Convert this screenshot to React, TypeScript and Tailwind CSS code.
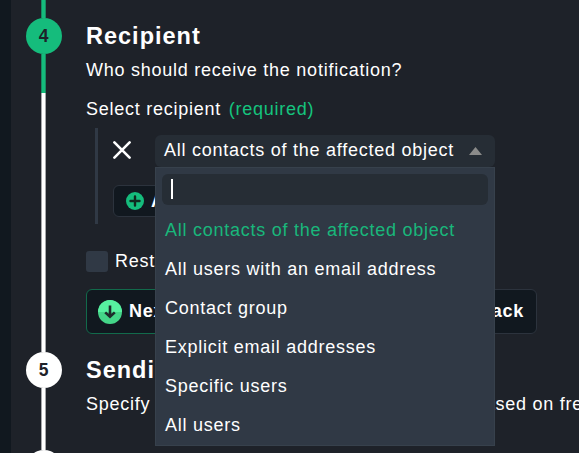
import type { ReactNode } from "react";

const options = [
  "All contacts of the affected object",
  "All users with an email address",
  "Contact group",
  "Explicit email addresses",
  "Specific users",
  "All users",
];

function Step({
  number,
  active,
  height,
  children,
}: {
  number: number;
  active?: boolean;
  height: string;
  children?: ReactNode;
}) {
  return (
    <li className={`flex shrink-0 ${height}`}>
      <div className="flex w-9 shrink-0 flex-col items-start">
        <span
          className={`flex h-9 w-9 shrink-0 items-center justify-center rounded-full pr-px text-[17.5px] font-bold tracking-normal text-[#1e2229] ${
            active ? "bg-[#15bc7c]" : "bg-white"
          }`}
        >
          {number}
        </span>
        {active && (
          <div className="ml-[15px] h-[39px] w-[5px] shrink-0 border-x border-[#178c62] bg-[#15bc7c]" />
        )}
        <div className="ml-[15px] w-[5px] grow border-x border-[#a5a6a9] bg-white" />
      </div>
      <div className="ml-6 flex min-w-0 grow flex-col items-start whitespace-nowrap">
        {children}
      </div>
    </li>
  );
}

function Dropdown() {
  return (
    <div className="absolute top-8 left-0 z-10 flex h-[279px] w-[340px] flex-col border border-[#37414c] bg-[#303945] pt-[6px]">
      <div className="mx-[6px] flex h-[31px] shrink-0 items-center rounded-md bg-[#262d35] pb-px pl-[9px]">
        <span className="h-5 w-[2px] bg-white" />
      </div>
      <ul className="mt-[6px]">
        {options.map((option, i) => (
          <li
            key={option}
            className={`h-[39px] pl-[9px] leading-[38px] ${i === 0 ? "text-[#19b77b]" : ""}`}
          >
            {option}
          </li>
        ))}
      </ul>
    </div>
  );
}

export default function App() {
  return (
    <main className="flex h-[453px] w-full overflow-hidden bg-[#1e2229] font-['Liberation_Sans',Arial,sans-serif] text-[18px] tracking-[0.75px] text-white">
      <aside className="w-[11px] shrink-0 bg-[#11181f]" />
      <ol className="ml-[15px] flex min-w-0 grow flex-col">
        <li className="flex h-[18px] w-9 shrink-0 pl-[15px]">
          <div className="w-[5px] border-x border-[#178c62] bg-[#15bc7c]" />
        </li>

        <Step number={4} active height="h-[334px]">
          <h2 className="h-9 text-[23.5px] leading-9 font-bold tracking-[1px]">
            Recipient
          </h2>
          <p className="mt-[5px] leading-[22px]">
            Who should receive the notification?
          </p>
          <p className="mt-[17px] leading-[22px]">
            Select recipient <span className="ml-[2px] text-[#15c47e]">(required)</span>
          </p>

          <div className="mt-2 ml-[9px] h-24 border-l-3 border-[#303945] pl-[15px]">
            <div className="flex pt-[7px]">
              <svg
                className="mt-[6px] h-[18px] w-[18px]"
                viewBox="0 0 18 18"
                fill="none"
                stroke="white"
                strokeWidth="2.6"
                strokeLinecap="round"
              >
                <path d="M1.4 1.4 16.6 16.6M16.6 1.4 1.4 16.6" />
              </svg>
              <div className="relative ml-6">
                <div className="flex h-8 w-[340px] items-center justify-between rounded-md bg-[#262d35] pr-[13px] pb-[2px] pl-[9px]">
                  <span>All contacts of the affected object</span>
                  <svg className="mt-[2px] h-2 w-[13px]" viewBox="0 0 13 8">
                    <path d="M6.5 0 13 8H0Z" fill="#8b8b8a" />
                  </svg>
                </div>
                <Dropdown />
              </div>
            </div>
            <button className="mt-[18px] flex h-8 w-[160px] items-center rounded-md border border-[#2c333d] bg-[#11181f] pl-3 font-bold">
              <svg className="mr-[7px] h-[18px] w-[18px] shrink-0" viewBox="0 0 18 18">
                <circle cx="9" cy="9" r="9" fill="#15bc7c" />
                <path
                  d="M9 4.5v9M4.5 9h9"
                  stroke="#11281f"
                  strokeWidth="2.4"
                  strokeLinecap="round"
                />
              </svg>
              Add
            </button>
          </div>

          <label className="mt-[26px] flex h-[22px] items-center">
            <span className="mr-[7px] h-[21px] w-[22px] rounded-[3px] bg-[#303945]" />
            <span className="pt-px">Restrict</span>
          </label>

          <div className="mt-[17px] flex w-[451px] justify-between font-bold">
            <button className="flex h-[45px] w-[300px] items-center rounded-md border border-[#126a4b] bg-[#11181f] pl-[11px]">
              <svg className="mr-[7px] h-6 w-6 shrink-0" viewBox="0 0 24 24">
                <circle cx="12" cy="12" r="12" fill="#44d588" />
                <path d="M0 12a12 12 0 0 1 24 0Z" fill="#57f0a0" />
                <path
                  d="M12 5.5v11M7.2 12.4l4.8 4.4 4.8-4.4"
                  fill="none"
                  stroke="#1e2b2b"
                  strokeWidth="2.6"
                />
              </svg>
              Next
            </button>
            <button className="flex h-[45px] w-[110px] items-center justify-end rounded-md border border-[#2c333d] bg-[#11181f] pr-3">
              Back
            </button>
          </div>
        </Step>

        <Step number={5} height="h-[98px]">
          <h2 className="h-9 text-[23.5px] leading-9 font-bold tracking-[1px]">
            Sending
          </h2>
          <div className="mt-[5px] flex w-[497px] justify-between leading-[22px]">
            <span>Specify</span>
            <span>based on fre</span>
          </div>
        </Step>

        <Step number={6} height="h-9" />
      </ol>
    </main>
  );
}
